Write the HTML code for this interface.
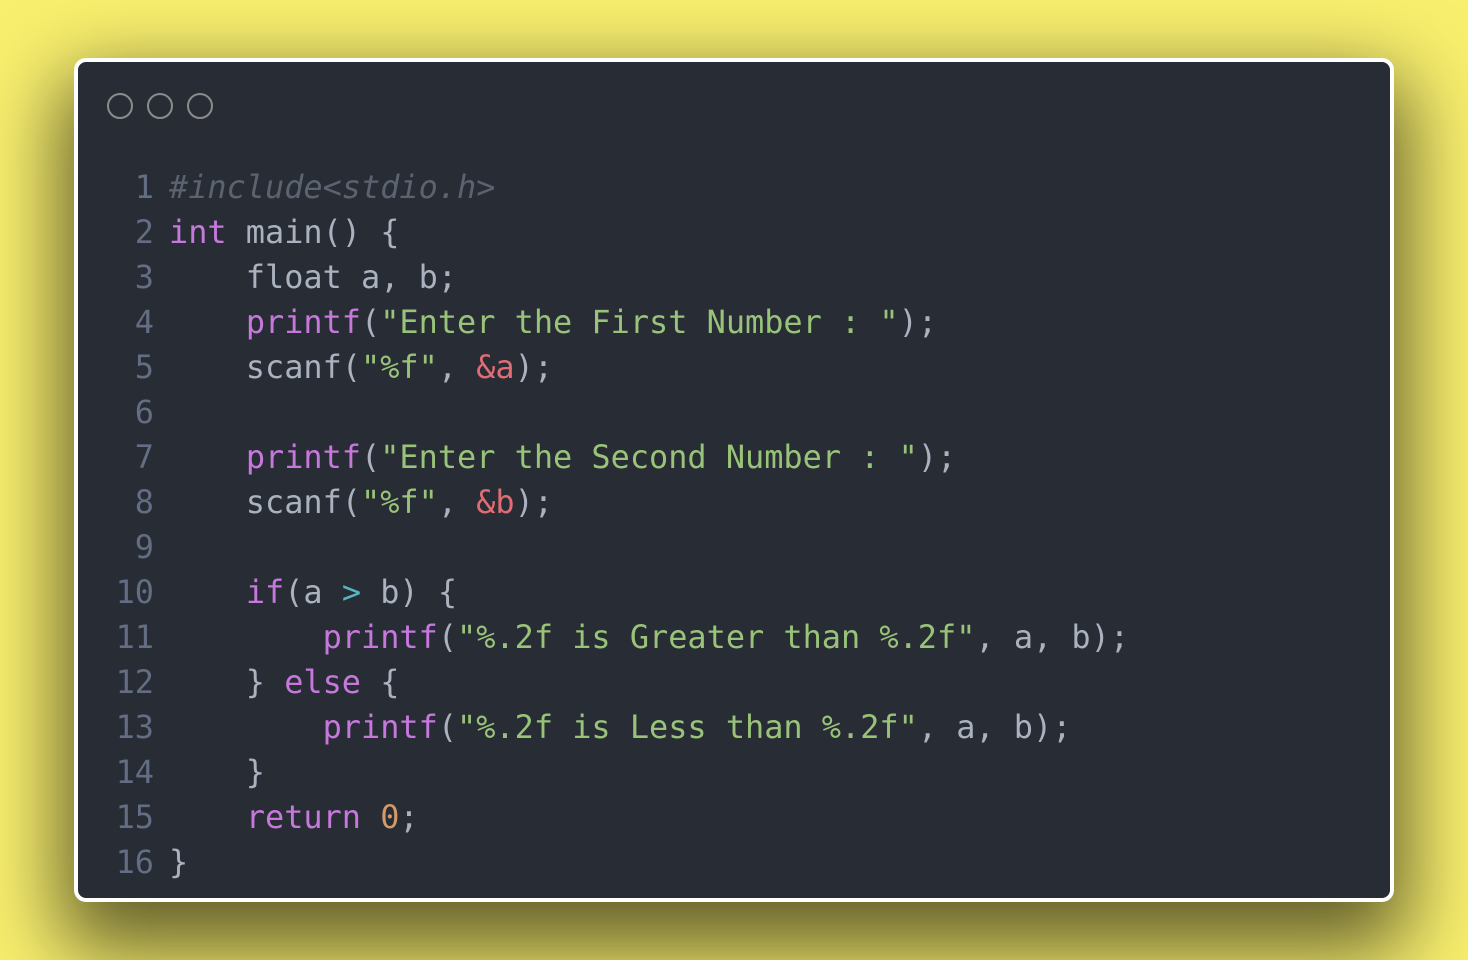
<!DOCTYPE html>
<html><head><style>
html,body{margin:0;width:1468px;height:960px;overflow:hidden;background:#f8ef6e;}
.card{position:absolute;left:74px;top:58px;width:1312px;height:836px;border:4px solid #fff;border-radius:12px;background:#282c34;box-shadow:0 34px 80px 14px rgba(0,0,0,0.6);}
.dot{position:absolute;top:31px;width:22px;height:22px;border:2px solid #8c8c8c;border-radius:50%;}
pre{position:absolute;left:0;top:103px;margin:0;font-family:"DejaVu Sans Mono","Liberation Mono",monospace;font-size:31.9px;line-height:45px;color:#abb2bf;}
.n{display:inline-block;width:76px;text-align:right;color:#636d83;margin-right:15px;}
.c{color:#5c6370;font-style:italic}.k{color:#c678dd}.s{color:#98c379}.r{color:#e06c75}.o{color:#56b6c2}.num{color:#d19a66}
</style></head><body>
<div class="card">
<div class="dot" style="left:29px"></div><div class="dot" style="left:69px"></div><div class="dot" style="left:109px"></div>
<pre><span class="n">1</span><span class="c">#include&lt;stdio.h&gt;</span>
<span class="n">2</span><span class="k">int</span> main() {
<span class="n">3</span>    float a, b;
<span class="n">4</span>    <span class="k">printf</span>(<span class="s">"Enter the First Number : "</span>);
<span class="n">5</span>    scanf(<span class="s">"%f"</span>, <span class="r">&amp;a</span>);
<span class="n">6</span>
<span class="n">7</span>    <span class="k">printf</span>(<span class="s">"Enter the Second Number : "</span>);
<span class="n">8</span>    scanf(<span class="s">"%f"</span>, <span class="r">&amp;b</span>);
<span class="n">9</span>
<span class="n">10</span>    <span class="k">if</span>(a <span class="o">&gt;</span> b) {
<span class="n">11</span>        <span class="k">printf</span>(<span class="s">"%.2f is Greater than %.2f"</span>, a, b);
<span class="n">12</span>    } <span class="k">else</span> {
<span class="n">13</span>        <span class="k">printf</span>(<span class="s">"%.2f is Less than %.2f"</span>, a, b);
<span class="n">14</span>    }
<span class="n">15</span>    <span class="k">return</span> <span class="num">0</span>;
<span class="n">16</span>}</pre>
</div>
</body></html>
